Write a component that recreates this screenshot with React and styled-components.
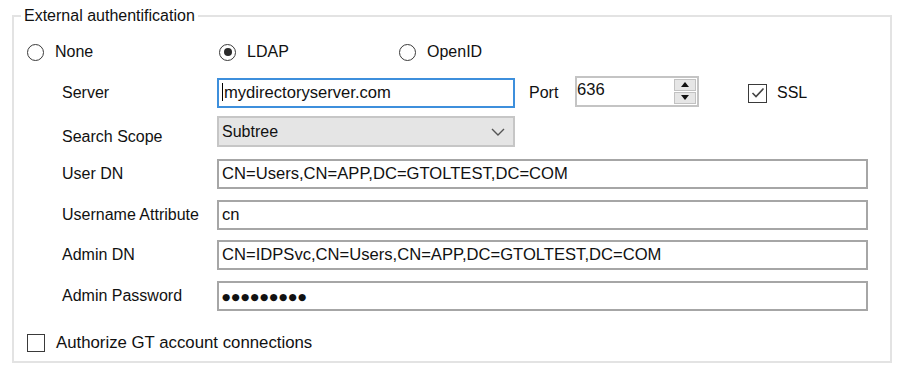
import React from 'react';
import styled, { createGlobalStyle } from 'styled-components';

const Global = createGlobalStyle`
  html, body { margin: 0; padding: 0; background: #fff; }
  body {
    font-family: "Liberation Sans", Arial, sans-serif;
    font-size: 16px;
    color: #111;
  }
`;

const Page = styled.div`
  width: 905px;
  height: 377px;
  padding: 6px 0 0 12px;
  box-sizing: border-box;
`;

const Group = styled.fieldset`
  margin: 0;
  width: 880px;
  height: 357px;
  box-sizing: border-box;
  border: 2px solid #e3e3e3;
  padding: 0 0 0 13px;
  display: flex;
  flex-direction: column;
`;

const Legend = styled.legend`
  padding: 0 3px;
  margin-left: -6px;
  font-size: 16px;
  line-height: 20px;
  color: #111;
`;

const RadioRow = styled.div`
  display: flex;
  align-items: center;
  height: 22px;
  margin-top: 15px;
`;

const RadioItem = styled.label`
  display: flex;
  align-items: center;
  gap: 11px;
  width: ${p => p.$w}px;
`;

const RadioCircle = styled.span`
  width: 17px;
  height: 17px;
  box-sizing: border-box;
  border: 1.5px solid #3a3a3a;
  border-radius: 50%;
  display: flex;
  align-items: center;
  justify-content: center;
  background: #fff;
  &::after {
    content: '';
    display: ${p => (p.$checked ? 'block' : 'none')};
    width: 8px;
    height: 8px;
    border-radius: 50%;
    background: #2a2a2a;
  }
`;

const Form = styled.div`
  display: grid;
  grid-template-columns: 155px 651px;
  grid-auto-rows: 30px;
  row-gap: 10.6px;
  margin: 15px 0 0 35px;
  width: 806px;
`;

const Label = styled.div`
  display: flex;
  align-items: center;
  padding-top: ${p => p.$dy || 0}px;
  white-space: nowrap;
`;

const Cell = styled.div`
  display: flex;
  align-items: center;
`;

const TextBox = styled.div`
  box-sizing: border-box;
  width: ${p => (p.$w ? `${p.$w}px` : '100%')};
  height: 30px;
  border: 2px solid ${p => (p.$focus ? '#3d8fdc' : '#a6a6a6')};
  background: #fff;
  padding-left: 3px;
  line-height: 26px;
  font-size: 16.6px;
  white-space: nowrap;
  overflow: hidden;
  color: #111;
`;

const Caret = styled.span`
  display: inline-block;
  width: 1px;
  height: 18px;
  background: #000;
  vertical-align: -3px;
  margin-right: 1px;
`;

const Dots = styled.span`
  font-family: "DejaVu Sans", sans-serif;
  font-size: 9.5px;
  letter-spacing: 1.2px;
  color: #111;
  vertical-align: 1px;
`;

const PortLabel = styled.span`
  margin-left: 14px;
  width: 46px;
`;

const PortBox = styled.div`
  box-sizing: border-box;
  width: 124px;
  height: 31px;
  margin-top: -4px;
  border: 2px solid #c4c4c4;
  background: #fff;
  display: flex;
`;

const PortText = styled.div`
  flex: 1;
  padding-left: 0;
  line-height: 24px;
  font-size: 16.6px;
`;

const Spinner = styled.div`
  width: 22px;
  display: flex;
  flex-direction: column;
  gap: 1px;
  padding: 1px 1px 1px 0;
`;

const SpinBtn = styled.div`
  flex: 1;
  background: #e6e6e6;
  border: 1px solid #c2c2c2;
  display: flex;
  align-items: center;
  justify-content: center;
`;

const CheckRow = styled.label`
  display: flex;
  align-items: center;
  gap: ${p => p.$gap || 11}px;
  margin-left: ${p => p.$ml || 0}px;
  margin-top: ${p => p.$mt || 0}px;
  font-size: ${p => p.$fs || 16}px;
`;

const CheckBox = styled.span`
  width: ${p => p.$size}px;
  height: ${p => p.$size}px;
  box-sizing: border-box;
  border: 1.5px solid #3a3a3a;
  background: #fff;
  display: flex;
  align-items: center;
  justify-content: center;
`;

const Combo = styled.div`
  box-sizing: border-box;
  width: 298px;
  height: 31px;
  margin-top: -4px;
  border: 2px solid #c6c6c6;
  background: #e5e5e5;
  display: flex;
  align-items: center;
  justify-content: space-between;
  padding: 0 8px 0 3px;
`;

const Tri = ({ up }) => (
  <svg width="8" height="5" viewBox="0 0 8 5">
    <polygon points={up ? '0,5 8,5 4,0' : '0,0 8,0 4,5'} fill="#111" />
  </svg>
);

export default function App() {
  return (
    <>
      <Global />
      <Page>
        <Group>
          <Legend>External authentification</Legend>
          <RadioRow>
            <RadioItem $w={192}>
              <RadioCircle />
              None
            </RadioItem>
            <RadioItem $w={180}>
              <RadioCircle $checked />
              LDAP
            </RadioItem>
            <RadioItem $w={120}>
              <RadioCircle />
              OpenID
            </RadioItem>
          </RadioRow>

          <Form>
            <Label>Server</Label>
            <Cell>
              <TextBox $w={298} $focus>
                <Caret />
                mydirectoryserver.com
              </TextBox>
              <PortLabel>Port</PortLabel>
              <PortBox>
                <PortText>636</PortText>
                <Spinner>
                  <SpinBtn><Tri up /></SpinBtn>
                  <SpinBtn><Tri /></SpinBtn>
                </Spinner>
              </PortBox>
              <CheckRow $ml={49} $gap={10}>
                <CheckBox $size={19}>
                  <svg width="14" height="12" viewBox="0 0 14 12">
                    <polyline points="1.5,6 5,9.5 12.5,1.5" fill="none" stroke="#444" strokeWidth="1.6" />
                  </svg>
                </CheckBox>
                SSL
              </CheckRow>
            </Cell>

            <Label $dy={6}>Search Scope</Label>
            <Cell>
              <Combo>
                <span>Subtree</span>
                <svg width="14" height="8" viewBox="0 0 14 8">
                  <polyline points="1,1 7,7 13,1" fill="none" stroke="#555" strokeWidth="1.4" />
                </svg>
              </Combo>
            </Cell>

            <Label>User DN</Label>
            <Cell>
              <TextBox>CN=Users,CN=APP,DC=GTOLTEST,DC=COM</TextBox>
            </Cell>

            <Label>Username Attribute</Label>
            <Cell>
              <TextBox>cn</TextBox>
            </Cell>

            <Label>Admin DN</Label>
            <Cell>
              <TextBox>CN=IDPSvc,CN=Users,CN=APP,DC=GTOLTEST,DC=COM</TextBox>
            </Cell>

            <Label>Admin Password</Label>
            <Cell>
              <TextBox>
                <Dots>●●●●●●●●●</Dots>
              </TextBox>
            </Cell>
          </Form>

          <CheckRow $mt={22} $fs={16.8}>
            <CheckBox $size={18} />
            Authorize GT account connections
          </CheckRow>
        </Group>
      </Page>
    </>
  );
}
